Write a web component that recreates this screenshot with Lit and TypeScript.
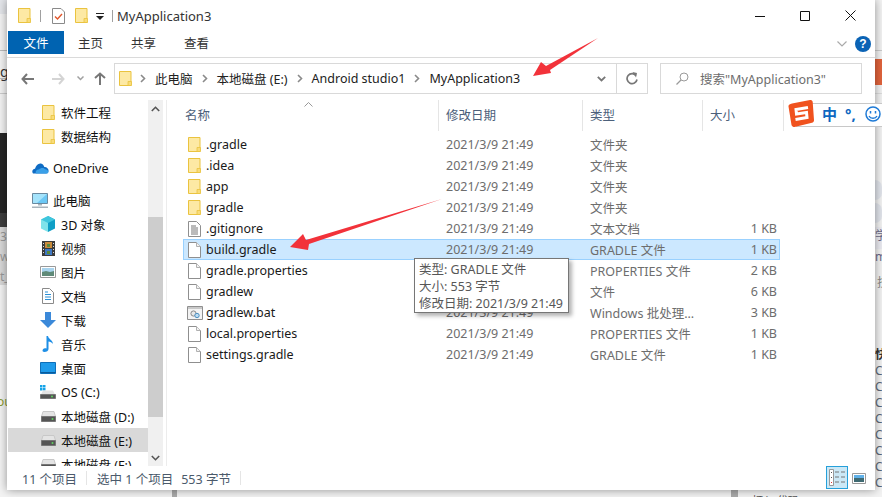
import { LitElement, html, css, svg } from "lit";
import { customElement } from "lit/decorators.js";

const folder = html`<svg class="ic13" width="13" height="15" viewBox="0 0 13 15"><path d="M.5.5h11.5v14H.5z" fill="#fde9a4" stroke="#eac33f"/><path d="M9 10.5h3.5v4H9z" fill="#f9dc79" stroke="#eac33f" stroke-width=".8"/></svg>`;
const doc = html`<svg width="13" height="16" viewBox="0 0 13 16"><path d="M.5.5h8l4 4v11H.5z" fill="#fff" stroke="#8f8f8f"/><path d="M8.5.5v4h4" fill="#f2f2f2" stroke="#b0b0b0"/></svg>`;
const txt = html`<svg width="13" height="16" viewBox="0 0 13 16"><path d="M.5.5h8l4 4v11H.5z" fill="#fff" stroke="#8f8f8f"/><path d="M3 5h5M3 7h7M3 9h7M3 11h7M3 13h7" stroke="#777"/></svg>`;
const bat = html`<svg width="16" height="14" viewBox="0 0 16 14"><path d="M.5.5h15v13H.5z" fill="#f3f3f3" stroke="#8f8f8f"/><path d="M1 1h14v2H1z" fill="#c9c9c9"/><circle cx="6.5" cy="7.5" r="2.6" fill="#e8e8e8" stroke="#888"/><circle cx="10" cy="9.5" r="2.2" fill="#bcdcf2" stroke="#4d8fc0"/></svg>`;
const drive = html`<svg width="15" height="11" viewBox="0 0 15 11"><path d="M2 .5h11l1.5 5h-14z" fill="#e4e4e4" stroke="#c8c8c8"/><path d="M.5 5.5h14v5H.5z" fill="#555" stroke="#777"/><circle cx="11.5" cy="8" r="1" fill="#5fd35f"/></svg>`;
const chevR = html`<svg width="6" height="9" viewBox="0 0 6 9"><path d="M1 1l3.5 3.5L1 8" fill="none" stroke="#8a8a8a" stroke-width="1.6"/></svg>`;

const files: [string, string, string, string, string][] = [
  ["f", ".gradle", "2021/3/9 21:49", "文件夹", ""],
  ["f", ".idea", "2021/3/9 21:49", "文件夹", ""],
  ["f", "app", "2021/3/9 21:49", "文件夹", ""],
  ["f", "gradle", "2021/3/9 21:49", "文件夹", ""],
  ["t", ".gitignore", "2021/3/9 21:49", "文本文档", "1 KB"],
  ["d", "build.gradle", "2021/3/9 21:49", "GRADLE 文件", "1 KB"],
  ["d", "gradle.properties", "2021/3/9 21:49", "PROPERTIES 文件", "2 KB"],
  ["d", "gradlew", "2021/3/9 21:49", "文件", "6 KB"],
  ["b", "gradlew.bat", "2021/3/9 21:49", "Windows 批处理...", "3 KB"],
  ["d", "local.properties", "2021/3/9 21:49", "PROPERTIES 文件", "1 KB"],
  ["d", "settings.gradle", "2021/3/9 21:49", "GRADLE 文件", "1 KB"],
];
const fileIcon = (k: string) => (k === "f" ? folder : k === "t" ? txt : k === "b" ? bat : doc);

const cloud = html`<svg width="17" height="12" viewBox="0 0 17 12"><path d="M1 11.5C-.5 9.5.5 7 3 6.8 4 3 7 .5 10 2c1.500.7 2 2 2.300 3 2.500-.3 4.700 2 4.200 4.500l-2 2z" fill="#0f6cc4"/><path d="M4 11.500c-1-2 .5-4 3-4 1.500-2 5-2 6-.2 2 0 3.500 1.500 3.500 2.700-.3 1-1 1.500-1.500 1.500z" fill="#3aa0e8"/></svg>`;
const pc = html`<svg width="16" height="15" viewBox="0 0 16 15"><path d="M.5.5h15v10H.5z" fill="#6cc8f5" stroke="#6a8aa0"/><path d="M1 1h14L5 10H1z" fill="#a4e3fb"/><path d="M6 11h4v1.500H6zM0 13.500h16V15H0z" fill="#a8b4bc"/></svg>`;
const cube = html`<svg width="16" height="16" viewBox="0 0 16 16"><path d="M8 0l7 3.500v9L8 16z" fill="#0f9fc6"/><path d="M8 0L1 3.500v9L8 16z" fill="#7fe3ea"/><path d="M1 3.500L8 7l7-3.500L8 0z" fill="#3fc6dd"/></svg>`;
const film = html`<svg width="13" height="15" viewBox="0 0 13 15"><path d="M0 0h13v15H0z" fill="#3b3b3b"/><path d="M3 1h7v6H3z" fill="#c98b3a"/><path d="M3 8h7v6H3z" fill="#3f78c4"/><path d="M5 3h3v3H5zM5 10h3v3H5z" fill="#5b8a3a"/><path d="M1 2h1v1H1zM1 5h1v1H1zM1 8h1v1H1zM1 11h1v1H1zM11 2h1v1h-1zM11 5h1v1h-1zM11 8h1v1h-1zM11 11h1v1h-1z" fill="#ddd"/></svg>`;
const pic = html`<svg width="16" height="12" viewBox="0 0 16 12"><path d="M.5.5h15v11H.5z" fill="#fff" stroke="#999"/><path d="M2 2h12v4H2z" fill="#a9d4ee"/><path d="M2 6l4-1 4 1 4-1v5H2z" fill="#5f8a78"/></svg>`;
const docs = html`<svg width="12" height="16" viewBox="0 0 12 16"><path d="M.5.5h7l4 4v11H.5z" fill="#fff" stroke="#8a8a8a"/><path d="M3 4h3M3 6.500h6M3 9h6M3 11.500h6" stroke="#2b8fd6" stroke-width="1.200"/></svg>`;
const down = html`<svg width="16" height="16" viewBox="0 0 16 16"><path d="M5 0h6v8h5l-8 8-8-8h5z" fill="#3b89d9"/></svg>`;
const note = html`<svg width="12" height="16" viewBox="0 0 12 16"><path d="M4.500 0H6c.3 3 5 4 5 8-1-1.500-3-2.500-4.500-2.500V13c0 2-2 3-4 3S0 14.500 1 13.200c.7-1 2.200-1.200 3.500-.7z" fill="#1f8fe6"/></svg>`;
const desk = html`<svg width="16" height="12" viewBox="0 0 16 12"><path d="M.5.5h15v11H.5z" fill="#1f9bea" stroke="#0f6fb8"/><path d="M.5 10.500h15" stroke="#0a5b9c"/></svg>`;
const osd = html`<svg width="16" height="14" viewBox="0 0 16 14"><path d="M0 0h2.500v2.500H0zM3 0h2.500v2.500H3zM0 3h2.500v2.500H0zM3 3h2.500v2.500H3z" fill="#15a3e8"/><path d="M3 5.500h10l2 4H1z" fill="#e4e4e4"/><path d="M.5 9.500h15v4H.5z" fill="#555" stroke="#777"/><circle cx="12" cy="11.500" r="1" fill="#5fd35f"/></svg>`;

type Nav = [string, "a" | "b" | "c", unknown, boolean?];
const navItems: Nav[] = [
  ["软件工程", "a", folder],
  ["数据结构", "a", folder],
  ["OneDrive", "b", cloud],
  ["此电脑", "b", pc],
  ["3D 对象", "c", cube],
  ["视频", "c", film],
  ["图片", "c", pic],
  ["文档", "c", docs],
  ["下载", "c", down],
  ["音乐", "c", note],
  ["桌面", "c", desk],
  ["OS (C:)", "c", osd],
  ["本地磁盘 (D:)", "c", drive],
  ["本地磁盘 (E:)", "c", drive, true],
  ["本地磁盘 (F:)", "c", drive],
];
const crumbs = ["此电脑", "本地磁盘 (E:)", "Android studio1", "MyApplication3"];
const rightC = Array.from({ length: 8 }, () => "Ct");

@customElement("app-root")
export class AppRoot extends LitElement {
  static styles = css`
    :host {
      display: block;
      position: relative;
      width: 882px;
      height: 497px;
      overflow: hidden;
      background: #f1f1f1;
      font-family: "Noto Sans", "Noto Sans CJK SC", sans-serif;
      font-size: 12.5px;
      color: #1a1a1a;
    }
    svg { display: block; flex: none; }
    .bg-left, .bg-right, .bg-bottom { position: absolute; overflow: hidden; color: #666; }
    .bg-left { left: 0; top: 0; width: 7px; height: 497px; background: #f3f3f3; }
    .bl { position: absolute; left: 0; width: 7px; }
    .bl0 { top: 0; height: 14px; background: #e4e6ea; }
    .bl1 { top: 50px; height: 1px; background: #bbb; }
    .bl2 { top: 78px; height: 1px; background: #bbb; }
    .bl3 { top: 93px; height: 1px; background: #ccc; }
    .bl4 { top: 133px; height: 80px; background: #262626; }
    .bl5 { top: 213px; height: 14px; background: #3e3e3e; }
    .bl6 { top: 227px; height: 58px; background: #d8d8d8; }
    .blt { position: absolute; left: 0; font-size: 12px; line-height: 14px; white-space: nowrap; }
    .t1 { top: 65px; left: 0; color: #333; font-size: 14px; }
    .t2 { top: 230px; color: #999; }
    .t3 { top: 250px; color: #999; }
    .t4 { top: 270px; color: #999; }
    .t5 { top: 395px; color: #8a9a30; left: -3px; }
    .bg-right { left: 875px; top: 0; width: 7px; height: 497px; background: #f3f3f3; }
    .br { position: absolute; left: 0; width: 7px; }
    .br1 { top: 50px; height: 1px; background: #ccc; }
    .br2 { top: 59px; height: 26px; background: #e2643c; }
    .br3 { top: 93px; height: 1px; background: #ddd; }
    .br4 { top: 180px; height: 20px; border-radius: 0 10px 10px 0; background: #e2e5ec; }
    .br5 { top: 203px; height: 20px; border-radius: 0 10px 10px 0; background: #e2e5ec; }
    .br6 { top: 227px; height: 22px; background: #ececf2; }
    .brt { position: absolute; left: 0; font-size: 12px; line-height: 16px; white-space: nowrap; color: #6a6a8a; }
    .r1 { top: 228px; }
    .r2 { top: 249px; }
    .r3 { top: 275px; left: 2px; color: #888; }
    .r4 { top: 347px; color: #333; font-weight: 700; }
    .cs { position: absolute; left: 0; top: 363px; width: 7px; display: flex; flex-direction: column; color: #5a6a7a; font-size: 12px; line-height: 16px; }
    .bg-bottom { left: 7px; top: 490px; width: 868px; height: 7px; background: #f3f3f3; }
    .bb1 { position: absolute; left: 165px; top: 0; width: 5px; height: 7px; background: #aaa; }
    .bb2 { position: absolute; left: 724px; top: 0; width: 7px; height: 7px; background: #aaa; }
    .bb3 { position: absolute; left: 745px; top: 2px; font-size: 11px; color: #555; white-space: nowrap; }

    .window {
      position: absolute;
      left: 7px;
      top: 0;
      width: 868px;
      height: 490px;
      background: #fff;
      box-shadow: 0 0 9px rgba(0, 0, 0, 0.4);
      display: flex;
      flex-direction: column;
    }
    .title { height: 31px; display: flex; align-items: center; flex: none; }
    .title-icons { display: flex; align-items: center; margin-left: 11px; }
    .sep { width: 1px; height: 12px; background: #a0a0a0; }
    .s1 { margin: 0 11px 0 9px; }
    .s2 { margin: 0 4px 0 8px; }
    .qa { margin-left: 10px; }
    .caret { margin-left: 8px; }
    .title-text { font-size: 13px; color: #333; }
    .controls { margin-left: auto; display: flex; align-items: center; margin-right: 19px; gap: 35px; }

    .ribbon { height: 27px; flex: none; display: flex; align-items: flex-start; border-bottom: 1px solid #dadada; box-sizing: border-box; padding-left: 1px; }
    .tab { width: 53px; height: 23px; line-height: 26px; text-align: center; color: #333; }
    .tab.file { width: 56px; background: #0063b1; color: #fff; margin-right: 0; }
    .rib-right { margin-left: auto; display: flex; align-items: center; gap: 8px; margin-right: 4px; margin-top: 5px; }
    .help { width: 16px; height: 16px; border-radius: 50%; background: #0b63b5; color: #fff; font: 700 12px/16px "Liberation Sans", sans-serif; text-align: center; }

    .navbar { height: 42px; flex: none; display: flex; align-items: flex-start; padding-top: 5px; box-sizing: border-box; }
    .nav-btns { width: 107px; flex: none; height: 31px; display: flex; align-items: center; }
    .back { margin-left: 14px; }
    .fwd { margin-left: 18px; }
    .drop { margin-left: 12px; }
    .up { margin-left: 10px; }
    .addr { width: 534px; height: 31px; box-sizing: border-box; border: 1px solid #d9d9d9; display: flex; align-items: center; flex: none; padding-left: 4px; }
    .crumb { display: flex; align-items: center; color: #222; }
    .crumb svg { margin: 0 9px 0 10px; }
    .crumb:nth-child(2) { margin-left: -2px; }
    .crumb:nth-child(n + 3) { margin-left: -1px; }
    .crumbs { display: flex; align-items: center; flex: 1; }
    .addr-btn { width: 31px; align-self: stretch; display: flex; align-items: center; justify-content: center; box-sizing: border-box; }
    .addr-btn.dd { width: 29px; }
    .addr-btn.rf { border-left: 1px solid #d9d9d9; }
    .search { margin-left: 12px; width: 202px; height: 31px; box-sizing: border-box; border: 1px solid #d9d9d9; display: flex; align-items: center; padding-left: 15px; color: #6d6d6d; flex: none; gap: 11px; }

    .body { flex: 1; min-height: 0; display: flex; }
    .navpane { width: 140px; flex: none; margin-left: 1px; overflow: hidden; }
    .ni { height: 24px; display: flex; align-items: center; white-space: nowrap; color: #111; }
    .ni.a { padding-left: 34px; }
    .ni.b { padding-left: 24px; margin-top: 8px; }
    .ni.c { padding-left: 32px; }
    .ni.sel { background: #d9d9d9; }
    .ni .ico { width: 16px; display: flex; justify-content: center; margin-right: 5px; flex: none; }
    .ni.a .ico { width: 13px; margin-right: 6px; }
    .scroll { width: 15px; flex: none; background: #f0f0f0; display: flex; flex-direction: column; align-items: center; }
    .sc-top { height: 117px; width: 100%; display: flex; justify-content: center; padding-top: 6px; box-sizing: border-box; }
    .thumb { height: 200px; width: 100%; background: #cdcdcd; flex: none; }
    .sc-bot { flex: 1; width: 100%; display: flex; justify-content: center; align-items: flex-end; padding-bottom: 5px; box-sizing: border-box; }
    .divider { width: 1px; margin-left: 3px; background: #ececec; flex: none; }
    .main { flex: 1; min-width: 0; padding-left: 16px; }
    .head { display: grid; grid-template-columns: 256px 144px 120px 81px; height: 28px; margin-bottom: 6px; position: relative; }
    .hc { border-right: 1px solid #e5e5e5; padding-left: 7px; line-height: 31px; color: #4c607a; }
    .hc:first-child { padding-left: 2px; }
    .sort { position: absolute; left: 121px; top: 2px; }
    .row { display: grid; grid-template-columns: 256px 144px 120px 77px; width: 597px; height: 21px; box-sizing: border-box; align-items: center; color: #6d6d6d; border: 1px solid transparent; margin-left: 0; white-space: nowrap; }
    .row.sel { background: #cce8ff; border-color: #99d1ff; }
    .name { display: flex; align-items: center; color: #1a1a1a; padding-left: 4px; }
    .name .ico { width: 13px; margin-right: 5px; display: flex; justify-content: center; }
    .date { padding-left: 6px; }
    .type { padding-left: 6px; }
    .size { text-align: right; padding-right: 4px; }

    .status { height: 24px; flex: none; display: flex; align-items: center; padding-left: 15px; color: #4b5a6b; position: relative; }
    .st-sep { width: 1px; height: 14px; background: #e5e5e5; margin: 0 10px 0 9px; }
    .st-gap { margin-left: 8px; }
    .views { margin-left: auto; display: flex; align-items: center; margin-right: 9px; gap: 4px; }
    .vbtn { width: 22px; height: 23px; box-sizing: border-box; border: 1px solid #26a0da; background: #cbe8f6; display: flex; align-items: center; justify-content: center; margin-top: -1px; }

    .tooltip {
      position: absolute;
      left: 407px;
      top: 258px;
      width: 155px;
      height: 55px;
      box-sizing: border-box;
      background: #fff;
      border: 1px solid #767676;
      box-shadow: 3px 3px 4px rgba(0, 0, 0, 0.3);
      padding: 2px 4px;
      color: #575757;
      font-size: 12.5px;
      line-height: 17px;
      white-space: nowrap;
    }
    .ime {
      position: absolute;
      left: 788px;
      top: 100px;
      width: 94px;
      height: 27px;
      display: flex;
      align-items: center;
    }
    .ime-bar {
      position: absolute;
      left: 8px;
      right: 0;
      top: 3px;
      height: 24px;
      box-sizing: border-box;
      background: #fff;
      border: 1px solid #c8c8c8;
      border-right: 0;
    }
    .ime-logo { position: relative; }
    .ime-cn { position: relative; margin-left: 8px; color: #0e67c0; font-weight: 700; font-size: 15px; }
    .ime-pt { position: relative; margin-left: 8px; color: #0e67c0; font-weight: 700; font-size: 15px; line-height: 18px; width: 12px; }
    .ime-sm { position: relative; margin-left: 8px; }
    .arrows { position: absolute; left: 0; top: 0; pointer-events: none; }
  `;

  render() {
    return html`
      <div class="bg-left">
        <div class="bl bl0"></div>
        <div class="bl bl1"></div><div class="bl bl2"></div><div class="bl bl3"></div>
        <div class="bl bl4"></div><div class="bl bl5"></div><div class="bl bl6"></div>
        <span class="blt t1">g</span><span class="blt t2">3</span><span class="blt t3">w</span><span class="blt t4">t_</span><span class="blt t5">ou</span>
      </div>
      <div class="bg-right">
        <div class="br br1"></div><div class="br br2"></div><div class="br br3"></div>
        <div class="br br4"></div><div class="br br5"></div><div class="br br6"></div>
        <span class="brt r1">学</span><span class="brt r2">m</span><span class="brt r3">技</span><span class="brt r4">快</span>
        <div class="cs">${rightC.map((c) => html`<span>${c}</span>`)}</div>
      </div>
      <div class="bg-bottom"><div class="bb1"></div><div class="bb2"></div><span class="bb3">打入 代码</span></div>

      <div class="window">
        <div class="title">
          <div class="title-icons">
            ${folder}
            <div class="sep s1"></div>
            <svg width="13" height="16" viewBox="0 0 13 16"><path d="M.5.5h8.500l3.500 3.500v11.500H.5z" fill="#fff" stroke="#8a8a8a"/><path d="M3 8.500l2.500 2.500L10 6" fill="none" stroke="#e2562a" stroke-width="1.400"/></svg>
            <span class="qa">${folder}</span>
            <svg class="caret" width="8" height="8" viewBox="0 0 8 8"><path d="M0 1h8v1H0z" fill="#222"/><path d="M0 4h8L4 8z" fill="#222"/></svg>
            <div class="sep s2"></div>
          </div>
          <span class="title-text">MyApplication3</span>
          <div class="controls">
            <svg width="10" height="10" viewBox="0 0 10 10"><path d="M0 5.500h10" stroke="#111"/></svg>
            <svg width="10" height="10" viewBox="0 0 10 10"><path d="M.5.500h9v9h-9z" fill="none" stroke="#111"/></svg>
            <svg width="11" height="11" viewBox="0 0 11 11"><path d="M.5.500l10 10M10.500.500l-10 10" stroke="#111"/></svg>
          </div>
        </div>
        <div class="ribbon">
          <div class="tab file">文件</div>
          <div class="tab">主页</div>
          <div class="tab">共享</div>
          <div class="tab">查看</div>
          <div class="rib-right">
            <svg width="10" height="6" viewBox="0 0 10 6"><path d="M.5.500L5 5 9.500.500" fill="none" stroke="#aaa" stroke-width="1.200"/></svg>
            <div class="help">?</div>
          </div>
        </div>
        <div class="navbar">
          <div class="nav-btns">
            <svg class="back" width="13" height="12" viewBox="0 0 13 12"><path d="M6 1L1.500 6 6 11M2 6h11" fill="none" stroke="#777" stroke-width="2"/></svg>
            <svg class="fwd" width="13" height="12" viewBox="0 0 13 12"><path d="M7 1l4.500 5L7 11M11 6H0" fill="none" stroke="#d4d4d4" stroke-width="2"/></svg>
            <svg class="drop" width="7" height="5" viewBox="0 0 7 5"><path d="M.5.500l3 3 3-3" fill="none" stroke="#a0a0a0" stroke-width="1.500"/></svg>
            <svg class="up" width="12" height="13" viewBox="0 0 12 13"><path d="M1 6l5-4.500L11 6M6 2v11" fill="none" stroke="#777" stroke-width="2"/></svg>
          </div>
          <div class="addr">
            <div class="crumbs">
              ${folder}
              ${crumbs.map((c) => html`<div class="crumb">${chevR}<span>${c}</span></div>`)}
            </div>
            <div class="addr-btn dd"><svg width="9" height="6" viewBox="0 0 9 6"><path d="M.8.800l3.700 3.700L8.200.800" fill="none" stroke="#777" stroke-width="1.800"/></svg></div>
            <div class="addr-btn rf"><svg width="12" height="13" viewBox="0 0 12 13"><path d="M10 3.500A5 5 0 1 0 11 7.500" fill="none" stroke="#777" stroke-width="1.700"/><path d="M6.500 0l4.500 1 -1 4.500z" fill="#777"/></svg></div>
          </div>
          <div class="search">
            <svg width="13" height="13" viewBox="0 0 13 13"><circle cx="8" cy="5" r="4" fill="none" stroke="#9a9a9a"/><path d="M5 8l-4.500 4.500" stroke="#9a9a9a" stroke-width="1.200"/></svg>
            <span>搜索"MyApplication3"</span>
          </div>
        </div>
        <div class="body">
          <div class="navpane">
            ${navItems.map(
              ([t, lvl, ic, sel]) => html`<div class="ni ${lvl} ${sel ? "sel" : ""}"><span class="ico">${ic}</span><span>${t}</span></div>`
            )}
          </div>
          <div class="scroll">
            <div class="sc-top"><svg width="9" height="6" viewBox="0 0 9 6"><path d="M.8 5l3.700-3.700L8.200 5" fill="none" stroke="#555" stroke-width="1.600"/></svg></div>
            <div class="thumb"></div>
            <div class="sc-bot"><svg width="9" height="6" viewBox="0 0 9 6"><path d="M.8 1l3.700 3.700L8.200 1" fill="none" stroke="#555" stroke-width="1.600"/></svg></div>
          </div>
          <div class="divider"></div>
          <div class="main">
            <div class="head">
              <div class="hc">名称</div>
              <div class="hc">修改日期</div>
              <div class="hc">类型</div>
              <div class="hc">大小</div>
              <svg class="sort" width="9" height="5" viewBox="0 0 9 5"><path d="M.5 4.500l4-4 4 4" fill="none" stroke="#999"/></svg>
            </div>
            ${files.map(
              ([k, n, d, t, s]) => html`<div class="row ${n === "build.gradle" ? "sel" : ""}">
                <div class="name"><span class="ico">${fileIcon(k)}</span><span>${n}</span></div>
                <div class="date">${d}</div>
                <div class="type">${t}</div>
                <div class="size">${s}</div>
              </div>`
            )}
          </div>
        </div>
        <div class="status">
          <span>11 个项目</span>
          <div class="st-sep"></div>
          <span>选中 1 个项目</span>
          <span class="st-gap">553 字节</span>
          <div class="st-sep"></div>
          <div class="views">
            <div class="vbtn">
              <svg width="16" height="17" viewBox="0 0 16 17"><path d="M.5.500h4v16h-4z" fill="#fff" stroke="#999"/><path d="M2 3h1v1H2zM2 8h1v1H2z" fill="#555"/><path d="M2 13h1v1H2z" fill="#d33"/><path d="M6 3h4M12 3h4M6 8h4M12 8h4M6 13h4M12 13h4" stroke="#777"/></svg>
            </div>
            <svg width="14" height="11" viewBox="0 0 14 11"><path d="M.5.500h13v10H.5z" fill="#fff" stroke="#999"/><path d="M2 2h10v3H2z" fill="#5fb0e8"/><path d="M2 5h10v4H2z" fill="#3f6a72"/></svg>
          </div>
        </div>
        <div class="tooltip">
          <div>类型: GRADLE 文件</div>
          <div>大小: 553 字节</div>
          <div>修改日期: 2021/3/9 21:49</div>
        </div>
      </div>

      <div class="ime">
        <div class="ime-bar"></div>
        <svg class="ime-logo" width="26" height="27" viewBox="0 0 26 27"><path d="M4 3.500L22 0c1.500-.2 2.500.7 2.700 2L26 20c.1 1.500-.8 2.500-2 2.700L6.500 27c-1.500.2-2.500-.7-3-2L.5 6.500C.2 5 1.800 3.900 4 3.500z" fill="#f0521e"/><path d="M20 7.500L8 9.500 8.500 14l10-1.500.5 5-11.500 2" fill="none" stroke="#fff" stroke-width="3"/></svg>
        <span class="ime-cn">中</span>
        <span class="ime-pt">°,</span>
        <svg class="ime-sm" width="16" height="16" viewBox="0 0 16 16"><circle cx="8" cy="8" r="7" fill="#fff" stroke="#1e7ad6" stroke-width="1.500"/><path d="M5.500 5v2.500M10.500 5v2.500" stroke="#1e7ad6" stroke-width="1.500"/><path d="M4 10c1.500 3 6.500 3 8 0" fill="none" stroke="#1e7ad6" stroke-width="1.400"/></svg>
      </div>

      <svg class="arrows" width="882" height="497" viewBox="0 0 882 497">
        ${svg`<path d="M533 76L541 62 546 66 598 38 550 70 551 73z" fill="#f2323a"/>`}
        ${svg`<path d="M290 247L303 234 306 240 442 199 309 244 308 250z" fill="#f2323a"/>`}
      </svg>
    `;
  }
}
